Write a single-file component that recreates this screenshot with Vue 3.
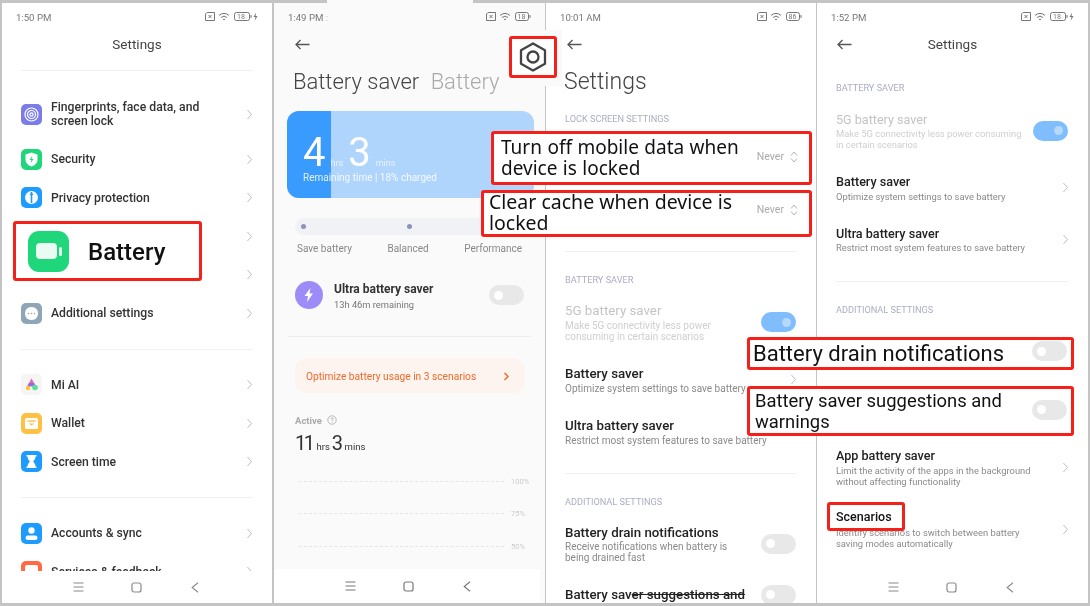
<template>
  <div class="stage">
    <div class="top-strip"></div>

    <!-- phone 1: settings home -->
    <section class="phone p1">
      <div class="status">
        <span>1:50 PM</span>
        <span class="status-icons">
          <svg width="54" height="12" viewBox="0 0 54 12" fill="none" stroke="#777" stroke-width="1">
            <path d="M3 1.500h7.500v8h-9v-6.500z"/><path d="M4.500 4l3 3M7.500 4l-3 3"/>
            <path d="M15 4.500a7 7 0 0 1 10 0M17 6.500a4.500 4.500 0 0 1 6 0M19 8.500a2 2 0 0 1 2 0"/>
            <rect x="30.500" y="1.500" width="15" height="8" rx="2"/><path d="M47 4v3"/>
            <text x="33" y="8" font-size="7" fill="#777" stroke="none" font-family="Roboto, sans-serif">18</text>
            <path d="M52 1.500l-2.500 4.500h2l-1 4 3-5h-2z" fill="#777" stroke="none"/>
          </svg>
        </span>
      </div>
      <div class="top-title">Settings</div>
      <div class="body">
        <div v-for="(group, g) in menuGroups" :key="g" class="group">
          <div v-for="row in group" :key="row.id" class="menu-row" :class="{ tall: row.tall }">
            <span v-if="row.icon" class="app-icon" :style="{ background: row.color }">
              <svg width="21" height="21" viewBox="0 0 21 21" fill="none">
                <g v-if="row.icon === 'finger'" stroke="#fff" stroke-width="1.200">
                  <circle cx="10.500" cy="10.500" r="6.500"/><circle cx="10.500" cy="10.500" r="4"/><circle cx="10.500" cy="10.500" r="1.600"/>
                </g>
                <g v-else-if="row.icon === 'shield'">
                  <path d="M10.500 3.500l6 2v5c0 3.500-2.500 5.800-6 7-3.500-1.200-6-3.500-6-7v-5z" fill="#fff"/>
                  <path d="M11.500 6.500l-3 4.500h2l-1 3.500 3-4.500h-2z" fill="#1fd67a"/>
                </g>
                <g v-else-if="row.icon === 'privacy'">
                  <circle cx="10.500" cy="10.500" r="6.500" fill="#fff"/>
                  <path d="M10.500 5v11" stroke="#1e9bff" stroke-width="1.600"/><path d="M8.500 8l2-2.500 2 2.500z" fill="#1e9bff"/>
                </g>
                <g v-else-if="row.icon === 'more'">
                  <rect x="4" y="4" width="13" height="13" rx="6" fill="#fff"/>
                  <circle cx="7.500" cy="10.500" r=".8" fill="#8fa5b8"/><circle cx="10.500" cy="10.500" r=".8" fill="#8fa5b8"/><circle cx="13.500" cy="10.500" r=".8" fill="#8fa5b8"/>
                </g>
                <g v-else-if="row.icon === 'ai'">
                  <path d="M10.500 4.500l4.500 8h-9z" fill="#f2609e"/>
                  <path d="M8 9h5l1.500 3h-8z" fill="#8a6cf0"/>
                  <circle cx="14" cy="13.500" r="2.800" fill="#5fdc9a"/>
                  <circle cx="7" cy="14" r="2.200" fill="#fcc633"/>
                </g>
                <g v-else-if="row.icon === 'wallet'">
                  <rect x="4" y="5" width="13" height="11" rx="1.500" fill="#fff"/>
                  <path d="M6.500 8h8" stroke="#ffc145" stroke-width="1.400"/>
                  <path d="M7.500 10.500h6l-3 2z" fill="#ffc145"/>
                </g>
                <g v-else-if="row.icon === 'hourglass'">
                  <path d="M5.500 4h10v1.500h-1c0 2.500-1.500 4-2.500 5 1 1 2.500 2.500 2.500 5h1V17h-10v-1.500h1c0-2.500 1.500-4 2.500-5-1-1-2.500-2.500-2.500-5h-1z" fill="#fff"/>
                </g>
                <g v-else-if="row.icon === 'user'">
                  <circle cx="10.500" cy="7.500" r="3.200" fill="#fff"/>
                  <rect x="4.500" y="12.500" width="12" height="4.500" rx="2.200" fill="#fff"/>
                </g>
                <g v-else-if="row.icon === 'service'">
                  <rect x="4" y="4" width="13" height="13" rx="2" fill="#fff"/>
                </g>
              </svg>
            </span>
            <span class="menu-label">{{ row.label }}</span>
            <svg class="chev" width="7" height="11" viewBox="0 0 7 11" fill="none"><path d="M1.500 1l4 4.500-4 4.500" stroke="#bdbdbd" stroke-width="1"/></svg>
          </div>
        </div>
      </div>
      <div class="nav">
        <svg width="11" height="10" viewBox="0 0 11 10" stroke="#8a8a8a" stroke-width="1.100"><path d="M.5 1h10M.5 5h10M.5 9h10"/></svg>
        <svg width="11" height="11" viewBox="0 0 11 11" fill="none" stroke="#8a8a8a" stroke-width="1.200"><rect x="1" y="1" width="9" height="9" rx="2"/></svg>
        <svg width="8" height="11" viewBox="0 0 8 11" fill="none" stroke="#8a8a8a" stroke-width="1.100"><path d="M7 .8L1.200 5.500 7 10.200"/></svg>
      </div>
    </section>

    <!-- phone 2: battery saver -->
    <section class="phone p2">
      <div class="status">
        <span>1:49 PM <i class="dot-stray">:</i></span>
        <span class="status-icons">
          <svg width="46" height="12" viewBox="0 0 46 12" fill="none" stroke="#777" stroke-width="1">
            <path d="M3 1.500h7.500v8h-9v-6.500z"/><path d="M4.500 4l3 3M7.500 4l-3 3"/>
            <path d="M15 4.500a7 7 0 0 1 10 0M17 6.500a4.500 4.500 0 0 1 6 0M19 8.500a2 2 0 0 1 2 0"/>
            <rect x="30.500" y="1.500" width="13" height="8" rx="2"/><path d="M45 4v3"/>
            <text x="32.500" y="8" font-size="7" fill="#777" stroke="none" font-family="Roboto, sans-serif">18</text>
          </svg>
        </span>
      </div>
      <div class="back">
        <svg width="15" height="11" viewBox="0 0 15 11" fill="none" stroke="#555" stroke-width="1.300"><path d="M14.500 5.500H1M5.500 1L1 5.500 5.500 10"/></svg>
      </div>
      <div class="page-title small-title">Battery saver <span class="muted-tab">Battery</span></div>

      <div class="card">
        <div class="card-fill" :style="{ width: chargedPct + '%' }"></div>
        <div class="card-time"><b>4</b><small>hrs</small><b>3</b><small>mins</small></div>
        <div class="card-note">Remaining time | 18% charged</div>
      </div>

      <div class="slider"><i></i><i></i><i></i></div>
      <div class="slider-labels"><span>Save battery</span><span>Balanced</span><span>Performance</span></div>

      <div class="ultra">
        <span class="ultra-icon">
          <svg width="28" height="28" viewBox="0 0 28 28"><path d="M15.500 7l-6 8h3.500l-1 6 6-8.500h-3.500z" fill="#fff"/></svg>
        </span>
        <div class="ultra-text">
          <div class="ultra-title">Ultra battery saver</div>
          <div class="ultra-sub">13h 46m remaining</div>
        </div>
        <span class="toggle"><i></i></span>
      </div>

      <div class="rule"></div>

      <div class="pill">
        <span>Optimize battery usage in 3 scenarios</span>
        <svg width="7" height="9" viewBox="0 0 7 9" fill="none" stroke="#f26a2a" stroke-width="1.500"><path d="M1.500 1l3.500 3.500-3.500 3.500"/></svg>
      </div>

      <div class="active-head">
        <span>Active</span>
        <svg width="10" height="10" viewBox="0 0 10 10" fill="none" stroke="#aaa" stroke-width=".8"><circle cx="5" cy="5" r="4.200"/><path d="M3.800 4c0-1.600 2.500-1.600 2.500 0 0 .9-1.300 1-1.300 2"/><path d="M5 7v.6"/></svg>
      </div>
      <div class="active-time"><b>11</b><small>hrs</small><b>3</b><small>mins</small></div>

      <div class="chart">
        <div v-for="tick in chartTicks" :key="tick" class="chart-row">
          <i></i><span>{{ tick }}%</span>
        </div>
      </div>

      <div class="nav nav-white">
        <svg width="11" height="10" viewBox="0 0 11 10" stroke="#777" stroke-width="1.100"><path d="M.5 1h10M.5 5h10M.5 9h10"/></svg>
        <svg width="11" height="11" viewBox="0 0 11 11" fill="none" stroke="#777" stroke-width="1.200"><rect x="1" y="1" width="9" height="9" rx="2"/></svg>
        <svg width="8" height="11" viewBox="0 0 8 11" fill="none" stroke="#777" stroke-width="1.100"><path d="M7 .8L1.200 5.500 7 10.200"/></svg>
      </div>
    </section>

    <!-- phone 3: battery settings, large title -->
    <section class="phone p3">
      <div class="status">
        <span>10:01 AM</span>
        <span class="status-icons">
          <svg width="46" height="12" viewBox="0 0 46 12" fill="none" stroke="#777" stroke-width="1">
            <path d="M3 1.500h7.500v8h-9v-6.500z"/><path d="M4.500 4l3 3M7.500 4l-3 3"/>
            <path d="M15 4.500a7 7 0 0 1 10 0M17 6.500a4.500 4.500 0 0 1 6 0M19 8.500a2 2 0 0 1 2 0"/>
            <rect x="30.500" y="1.500" width="13" height="8" rx="2"/><path d="M45 4v3"/>
            <text x="32.500" y="8" font-size="7" fill="#777" stroke="none" font-family="Roboto, sans-serif">86</text>
          </svg>
        </span>
      </div>
      <div class="back">
        <svg width="15" height="11" viewBox="0 0 15 11" fill="none" stroke="#555" stroke-width="1.300"><path d="M14.500 5.500H1M5.500 1L1 5.500 5.500 10"/></svg>
      </div>
      <div class="page-title">Settings</div>
      <div class="body">
        <div class="caption first">LOCK SCREEN SETTINGS</div>
        <div class="covered"></div>
        <div class="hr"></div>
        <div class="caption">BATTERY SAVER</div>
        <div class="item" v-for="item in saverItems" :key="item.title" :class="{ off: item.disabled }">
          <div class="item-text">
            <div class="item-title">{{ item.title }}</div>
            <div class="item-desc" v-html="item.desc3"></div>
          </div>
          <span v-if="item.toggle" class="toggle on"><i></i></span>
          <svg v-else class="chev" width="7" height="11" viewBox="0 0 7 11" fill="none"><path d="M1.500 1l4 4.500-4 4.500" stroke="#bdbdbd" stroke-width="1"/></svg>
        </div>
        <div class="hr"></div>
        <div class="caption">ADDITIONAL SETTINGS</div>
        <div class="item drain">
          <div class="item-text">
            <div class="item-title">Battery drain notifications</div>
            <div class="item-desc">Receive notifications when battery is<br>being drained fast</div>
          </div>
          <span class="toggle"><i></i></span>
        </div>
        <div class="item">
          <div class="item-text">
            <div class="item-title">Battery sav<span class="struck">er suggestions and</span></div>
          </div>
          <span class="toggle"><i></i></span>
        </div>
      </div>
    </section>

    <!-- phone 4: battery settings, small title -->
    <section class="phone p4">
      <div class="status">
        <span>1:52 PM</span>
        <span class="status-icons">
          <svg width="54" height="12" viewBox="0 0 54 12" fill="none" stroke="#777" stroke-width="1">
            <path d="M3 1.500h7.500v8h-9v-6.500z"/><path d="M4.500 4l3 3M7.500 4l-3 3"/>
            <path d="M15 4.500a7 7 0 0 1 10 0M17 6.500a4.500 4.500 0 0 1 6 0M19 8.500a2 2 0 0 1 2 0"/>
            <rect x="30.500" y="1.500" width="15" height="8" rx="2"/><path d="M47 4v3"/>
            <text x="33" y="8" font-size="7" fill="#777" stroke="none" font-family="Roboto, sans-serif">18</text>
            <path d="M52 1.500l-2.500 4.500h2l-1 4 3-5h-2z" fill="#777" stroke="none"/>
          </svg>
        </span>
      </div>
      <div class="top-title with-back">
        <svg width="15" height="11" viewBox="0 0 15 11" fill="none" stroke="#555" stroke-width="1.300"><path d="M14.500 5.500H1M5.500 1L1 5.500 5.500 10"/></svg>
        Settings
      </div>
      <div class="body">
        <div class="caption first-small">BATTERY SAVER</div>
        <div class="item" v-for="item in saverItems" :key="item.title" :class="{ off: item.disabled }">
          <div class="item-text">
            <div class="item-title">{{ item.title }}</div>
            <div class="item-desc" v-html="item.desc4"></div>
          </div>
          <span v-if="item.toggle" class="toggle on"><i></i></span>
          <svg v-else class="chev" width="7" height="11" viewBox="0 0 7 11" fill="none"><path d="M1.500 1l4 4.500-4 4.500" stroke="#bdbdbd" stroke-width="1"/></svg>
        </div>
        <div class="hr"></div>
        <div class="caption">ADDITIONAL SETTINGS</div>
        <div class="covered-small"></div>
        <div class="item">
          <div class="item-text">
            <div class="item-title">App battery saver</div>
            <div class="item-desc">Limit the activity of the apps in the background<br>without affecting functionality</div>
          </div>
          <svg class="chev" width="7" height="11" viewBox="0 0 7 11" fill="none"><path d="M1.500 1l4 4.500-4 4.500" stroke="#bdbdbd" stroke-width="1"/></svg>
        </div>
        <div class="item">
          <div class="item-text">
            <div class="item-title">&nbsp;</div>
            <div class="item-desc">Identify scenarios to switch between battery<br>saving modes automatically</div>
          </div>
          <svg class="chev" width="7" height="11" viewBox="0 0 7 11" fill="none"><path d="M1.500 1l4 4.500-4 4.500" stroke="#bdbdbd" stroke-width="1"/></svg>
        </div>
      </div>
      <div class="nav">
        <svg width="11" height="10" viewBox="0 0 11 10" stroke="#8a8a8a" stroke-width="1.100"><path d="M.5 1h10M.5 5h10M.5 9h10"/></svg>
        <svg width="11" height="11" viewBox="0 0 11 11" fill="none" stroke="#8a8a8a" stroke-width="1.200"><rect x="1" y="1" width="9" height="9" rx="2"/></svg>
        <svg width="8" height="11" viewBox="0 0 8 11" fill="none" stroke="#8a8a8a" stroke-width="1.100"><path d="M7 .8L1.200 5.500 7 10.200"/></svg>
      </div>
    </section>

    <!-- red callouts pasted on top of the screenshots -->
    <div class="mark m-battery">
      <span class="big-icon"><i></i><em></em></span>
      <span class="battery-word">Battery</span>
    </div>
    <div class="gear-patch">
      <div class="mark m-gear">
        <svg width="28" height="30" viewBox="0 0 28 30" fill="none" stroke="#444" stroke-width="2.300"><path d="M14 1.500l12 6.800v13.400l-12 6.800-12-6.800V8.300z" stroke-linejoin="round"/><circle cx="14" cy="15" r="5.500"/></svg>
      </div>
    </div>
    <div class="mark m-data">
      <span class="mark-text">Turn off mobile data when<br>device is locked</span>
      <span class="never">Never <svg width="8" height="12" viewBox="0 0 8 12" fill="none" stroke="#aaa" stroke-width=".9"><path d="M1 4.500L4 1l3 3.500M1 7.500L4 11l3-3.500"/></svg></span>
    </div>
    <div class="mark m-cache">
      <span class="mark-text">Clear cache when device is<br>locked</span>
      <span class="never">Never <svg width="8" height="12" viewBox="0 0 8 12" fill="none" stroke="#aaa" stroke-width=".9"><path d="M1 4.500L4 1l3 3.500M1 7.500L4 11l3-3.500"/></svg></span>
    </div>
    <div class="mark m-drain">
      <span>Battery drain notifications</span>
      <span class="toggle"><i></i></span>
    </div>
    <div class="mark m-warn">
      <span>Battery saver suggestions and<br>warnings</span>
      <span class="toggle"><i></i></span>
    </div>
    <div class="mark m-scen">Scenarios</div>
  </div>
</template>

<script setup>
const chargedPct = 17.8
const chartTicks = [100, 75, 50]

const menuGroups = [
  [
    { id: 'fp', label: 'Fingerprints, face data, and screen lock', icon: 'finger', color: '#7b7ce8', tall: true },
    { id: 'sec', label: 'Security', icon: 'shield', color: '#1fd67a' },
    { id: 'priv', label: 'Privacy protection', icon: 'privacy', color: '#1e9bff' },
    { id: 'hid1', label: '' },
    { id: 'hid2', label: '' },
    { id: 'add', label: 'Additional settings', icon: 'more', color: '#8fa5b8' },
  ],
  [
    { id: 'ai', label: 'Mi AI', icon: 'ai', color: '#f5f5f5' },
    { id: 'wal', label: 'Wallet', icon: 'wallet', color: '#ffc145' },
    { id: 'time', label: 'Screen time', icon: 'hourglass', color: '#1e9bff' },
  ],
  [
    { id: 'acc', label: 'Accounts & sync', icon: 'user', color: '#1e9bff' },
    { id: 'srv', label: 'Services & feedback', icon: 'service', color: '#ff6a45' },
  ],
]

const saverItems = [
  {
    title: '5G battery saver',
    desc3: 'Make 5G connectivity less power<br>consuming in certain scenarios',
    desc4: 'Make 5G connectivity less power consuming<br>in certain scenarios',
    disabled: true,
    toggle: true,
  },
  {
    title: 'Battery saver',
    desc3: 'Optimize system settings to save battery',
    desc4: 'Optimize system settings to save battery',
  },
  {
    title: 'Ultra battery saver',
    desc3: 'Restrict most system features to save battery',
    desc4: 'Restrict most system features to save battery',
  },
]
</script>

<style scoped>
.stage {
  position: relative;
  width: 1090px;
  height: 606px;
  display: flex;
  padding: 3px 0 3px 2px;
  box-sizing: border-box;
  background: #c4c4c4;
  overflow: hidden;
  font-family: Roboto, "Noto Sans", sans-serif;
  color: #222;
  filter: blur(.3px);
}
.top-strip {
  position: absolute;
  left: 327px;
  top: 0;
  width: 146px;
  height: 3px;
  background: #fafafa;
}

.phone {
  display: flex;
  flex-direction: column;
  height: 600px;
  overflow: hidden;
  background: #fff;
  flex: none;
}
.p1 { width: 270px; margin-right: 2px; }
.p2 { width: 271px; margin-right: 1px; background: #fafafa; }
.p3 { width: 270px; margin-right: 1px; }
.p4 { width: 271px; }

.status {
  display: flex;
  justify-content: space-between;
  align-items: center;
  flex: none;
  height: 28px;
  padding: 0 14px;
  font-size: 9.600px;
  color: #777;
}
.status-icons { display: flex; }
.dot-stray { font-style: normal; color: #bbb; }

.top-title {
  position: relative;
  flex: none;
  height: 27px;
  line-height: 27px;
  text-align: center;
  font-size: 13.500px;
  color: #444;
}
.top-title.with-back svg {
  position: absolute;
  left: 20px;
  top: 8px;
}

.body {
  flex: 1;
  min-height: 0;
  overflow: hidden;
}

.back {
  flex: none;
  height: 26px;
  display: flex;
  align-items: center;
  padding-left: 21px;
}
.page-title {
  flex: none;
  height: 47px;
  line-height: 47px;
  padding: 1px 0 0 18px;
  font-size: 23px;
  font-weight: 300;
  color: #444;
  white-space: nowrap;
}
.small-title { font-size: 22px; padding-left: 19px; }
.muted-tab { margin-left: 6px; color: #aaa; }

/* phone 1 */
.group { border-top: 1px solid #f0f0f0; margin: 0 19px; padding: 16px 0 16px; }
.group:first-child { margin-top: 12px; padding-top: 17px; }
.menu-row {
  display: flex;
  align-items: center;
  height: 38.500px;
  font-size: 12.200px;
  font-weight: 500;
  color: #333;
}
.menu-row.tall { height: 52px; line-height: 14.500px; }
.app-icon {
  flex: none;
  width: 21px;
  height: 21px;
  border-radius: 5px;
  margin-right: 9px;
}
.app-icon svg { display: block; }
.menu-label { flex: 1; max-width: 156px; }
.menu-row .chev { margin-left: auto; margin-right: 0; }

.nav {
  flex: none;
  height: 32px;
  display: flex;
  align-items: center;
  gap: 47px;
  padding-left: 71px;
  box-sizing: border-box;
  background: #fff;
}
.nav svg:last-child { margin-left: 2px; }
.nav-white { width: 266px; height: 34px; margin-top: auto; }

/* phone 2 */
.card {
  position: relative;
  flex: none;
  height: 87px;
  margin: 6px 11px 0 13px;
  border-radius: 12px;
  background: #b0d5fd;
  overflow: hidden;
  color: #fff;
}
.card-fill {
  position: absolute;
  left: 0;
  top: 0;
  bottom: 0;
  background: #3a9bff;
}
.card-time, .card-note { position: relative; }
.card-time {
  display: flex;
  align-items: baseline;
  padding: 25px 0 0 16px;
  height: 33px;
  line-height: 33px;
}
.card-time b { font-size: 40px; font-weight: 400; }
.card-time small { font-size: 9px; opacity: .7; margin: 0 5px 0 5px; }
.card-note { margin: 3px 0 0 16px; font-size: 10px; opacity: .85; white-space: nowrap; }

.slider {
  flex: none;
  display: flex;
  justify-content: space-between;
  align-items: center;
  height: 17px;
  margin: 20px 21px 0;
  padding: 0 6px;
  border-radius: 9px;
  background: #f0f2f6;
}
.slider i { width: 5px; height: 5px; border-radius: 50%; background: #8e93b8; }
.slider-labels {
  flex: none;
  display: flex;
  justify-content: space-between;
  height: 14px;
  line-height: 14px;
  margin: 7px 23px 0;
  font-size: 10px;
  color: #888;
}
.ultra {
  flex: none;
  display: flex;
  align-items: center;
  height: 28px;
  margin: 25px 21px 0;
}
.ultra-icon { flex: none; width: 28px; height: 28px; border-radius: 50%; background: #9d8cf8; margin-right: 11px; }
.ultra-icon svg { display: block; }
.ultra-text { flex: 1; padding-top: 2px; }
.ultra-title { font-size: 12px; font-weight: 700; line-height: 14px; color: #333; }
.ultra-sub { font-size: 9.300px; line-height: 12px; margin-top: 3px; color: #777; }
.rule { flex: none; height: 1px; margin: 27px 14px 0; background: #ececec; }
.pill {
  flex: none;
  display: flex;
  justify-content: space-between;
  align-items: center;
  height: 35px;
  margin: 21px 20px 0 21px;
  padding: 1px 15px 0 11px;
  box-sizing: border-box;
  border-radius: 12px;
  background: #fdf3ef;
  font-size: 10.200px;
  color: #f26a2a;
}
.active-head {
  flex: none;
  display: flex;
  align-items: center;
  gap: 5px;
  height: 14px;
  margin: 20px 21px 0;
  font-size: 9.500px;
  font-weight: 700;
  color: #aaa;
}
.active-time {
  flex: none;
  display: flex;
  align-items: baseline;
  height: 24px;
  line-height: 24px;
  margin: 4px 21px 0;
  color: #333;
}
.active-time b { font-size: 20px; font-weight: 400; letter-spacing: -2.500px; }
.active-time small { font-size: 9.500px; margin: 0 2px 0 4px; }
.chart { flex: 1; min-height: 0; margin: 10px 16px 0 25px; overflow: hidden; }
.chart-row { display: flex; align-items: center; height: 32.500px; }
.chart-row i { flex: none; width: 205px; border-top: 1px dashed #e6e6e6; }
.chart-row span { margin-left: 7px; font-size: 7.500px; color: #ccc; }

/* phones 3 and 4 */
.caption {
  height: 14px;
  line-height: 14px;
  margin: 22px 19px 3.500px;
  font-size: 9.200px;
  color: #a9aec4;
  white-space: nowrap;
}
.caption.first { margin-top: 7px; }
.caption.first-small { margin-top: 23px; margin-bottom: 4.500px; }
.covered { height: 106px; }
.covered-small { height: 116px; }
.hr { height: 1px; margin: 15.500px 20px 0 19px; background: #f0f0f0; }
.hr + .caption { margin-top: 21px; }
.item {
  display: flex;
  align-items: center;
  justify-content: space-between;
  padding: 12px 20px 12px 19px;
}
.drain { padding-bottom: 10px; }
.item-text { flex: 1; min-width: 0; }
.item-title { font-size: 12.600px; line-height: 15px; font-weight: 500; color: #222; white-space: nowrap; }
.item-desc { margin-top: 1.500px; font-size: 9.400px; line-height: 11px; color: #8a8a8a; white-space: nowrap; }
.p3 .item-title { font-size: 13.300px; }
.p3 .item-desc { margin-top: 2px; font-size: 10px; }
.p3 .drain .item-desc { margin-top: 1px; }
.item .chev { margin-right: -1px; }
.item.off .item-title { color: #c4c4c4; font-weight: 400; }
.item.off .item-desc { color: #cfcfcf; }
.struck { text-decoration: line-through; }

.toggle {
  flex: none;
  position: relative;
  display: block;
  width: 35px;
  height: 20px;
  border-radius: 10px;
  background: #e8e8e8;
}
.toggle i {
  position: absolute;
  top: 5.500px;
  left: 5px;
  width: 9px;
  height: 9px;
  border-radius: 50%;
  background: #fff;
}
.toggle.on { background: #7fbdfd; }
.toggle.on i { left: auto; right: 5px; background: #b5d8fb; }

/* callouts */
.mark {
  position: absolute;
  display: flex;
  align-items: center;
  justify-content: space-between;
  box-sizing: border-box;
  border: 3px solid #f5201a;
  border-radius: 3px;
  background: #fff;
  font-family: "Noto Sans", sans-serif;
  color: #111;
  white-space: nowrap;
}
.m-battery {
  left: 13px; top: 221px; width: 189px; height: 60px;
  justify-content: flex-start;
  padding-left: 12px;
  font-family: Roboto, sans-serif;
  font-size: 24px;
  font-weight: 500;
}
.battery-word { margin-top: 1px; }
.big-icon {
  position: relative;
  width: 41px;
  height: 41px;
  margin-right: 19px;
  border-radius: 11px;
  background: #1fd67a;
}
.big-icon i {
  position: absolute;
  left: 8px; top: 12px; width: 21px; height: 16px;
  border-radius: 4px;
  background: #fff;
  opacity: .9;
}
.big-icon em {
  position: absolute;
  left: 31px; top: 16px; width: 3px; height: 9px;
  border-radius: 2px;
  background: #fff;
  opacity: .9;
}
.gear-patch {
  position: absolute;
  left: 510px; top: 30px; width: 52px; height: 56px;
  background: #fafafa;
}
.m-gear { left: -1px; top: 6px; width: 48px; height: 42px; justify-content: center; }
.m-data { left: 491px; top: 131px; width: 321px; height: 54px; padding: 0 11px 0 7px; font-size: 19px; word-spacing: .5px; line-height: 21.500px; }
.m-cache { left: 481px; top: 190px; width: 331px; height: 47px; padding: 0 11px 0 5px; font-size: 19.500px; line-height: 21px; }
.m-cache .mark-text { margin-top: -4px; }
.m-cache .never { margin-bottom: 8px; }
.m-data .never { margin-bottom: 2px; }
.never { display: flex; align-items: center; gap: 6px; font-family: Roboto, sans-serif; font-size: 10.500px; word-spacing: 0; color: #aaa; }
.m-drain {
  left: 747px; top: 337px; width: 327px; height: 33px;
  padding: 0 4px 0 3px;
  font-family: Roboto, sans-serif;
  font-size: 22px;
}
.m-drain .toggle { margin-bottom: 5px; }
.m-warn {
  left: 747px; top: 386px; width: 327px; height: 50px;
  padding: 0 4px 0 5px;
  line-height: 21px;
  font-family: Roboto, sans-serif;
  font-size: 18.400px;
}
.m-warn .toggle { margin-bottom: 3px; }
.m-scen {
  left: 827px; top: 502px; width: 78px; height: 29px;
  justify-content: flex-start;
  padding-left: 6px;
  font-family: Roboto, sans-serif;
  font-size: 12.500px;
  font-weight: 500;
}
</style>

<style>
html, body { margin: 0; background: #c4c4c4; }
</style>
